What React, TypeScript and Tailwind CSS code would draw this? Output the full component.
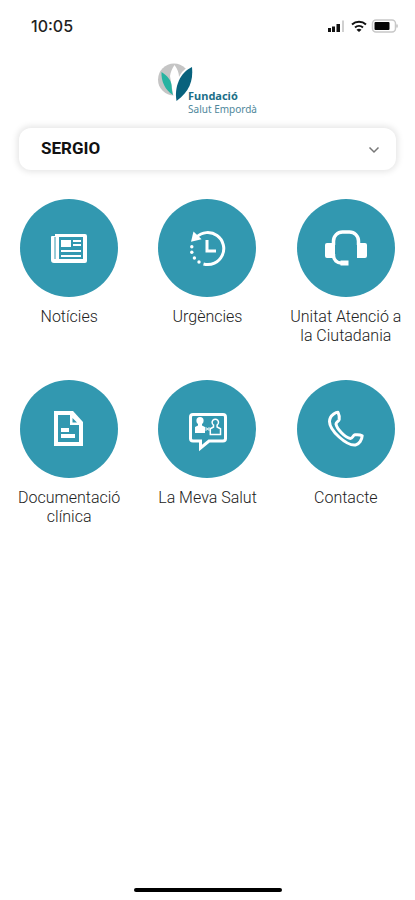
import type { ReactNode } from "react";

const TEAL = "#3298b0";

function NewsIcon() {
  return (
    <g>
      <path d="M12 10h28a2 2 0 0 1 2 2v25a2 2 0 0 1-2 2H9a3 3 0 0 1-3-3V13a1 1 0 0 1 1-1h3v-2z" fill="#fff" />
      <path d="M14 13h24v22H14z" fill={TEAL} />
      <path d="M10 13v22" stroke={TEAL} strokeWidth="1" />
      <path d="M16 16h10v7H16zM28 16h8v2h-8zM28 20h8v2h-8zM16 26h20v2H16zM16 31h20v2H16z" fill="#fff" />
    </g>
  );
}

function HistoryIcon() {
  return (
    <g fill="none" stroke="#fff" strokeWidth="3">
      <path d="M13.5 13.2A16 16 0 1 1 20.5 40" />
      <path d="M24 16v11h9" />
      <g fill="#fff" stroke="none">
        <path d="M10.5 7.5 8 17.8l10.6-2.5z" />
        <circle cx="8.8" cy="22.7" r="1.7" />
        <circle cx="8.8" cy="28.2" r="1.7" />
        <circle cx="11.4" cy="34" r="1.7" />
        <circle cx="16" cy="38" r="1.7" />
      </g>
    </g>
  );
}

function HeadsetIcon() {
  return (
    <g fill="none" stroke="#fff" strokeWidth="3.5">
      <path d="M11.5 21v-4a9 9 0 0 1 9-9h7a9 9 0 0 1 9 9v4M11.5 30v2a7.5 7.5 0 0 0 7.5 7h1" />
      <path
        d="M5 19h8v15H5a2 2 0 0 1-2-2V21a2 2 0 0 1 2-2zM35 19h8a2 2 0 0 1 2 2v11a2 2 0 0 1-2 2h-8zM18.5 36.5h8v5h-8z"
        fill="#fff"
        stroke="none"
      />
    </g>
  );
}

function DocumentIcon() {
  return (
    <g>
      <path d="M9 6h19l10 11v24H9z" fill="#fff" />
      <path d="M13 10h12v10h9v17H13z" fill={TEAL} />
      <path d="M27.5 13v4.5h4.5z" fill={TEAL} />
      <path d="M16 23h8v4h-8zM16 29h14v4H16z" fill="#fff" />
    </g>
  );
}

function ChatIcon() {
  return (
    <g fill="none" stroke="#fff" strokeWidth="3">
      <path d="M10 9.5h30a2.500 2.500 0 0 1 2.500 2.500v21.500a2.500 2.500 0 0 1-2.500 2.500H26l-8.500 7v-7H10a2.500 2.500 0 0 1-2.500-2.500V12A2.500 2.500 0 0 1 10 9.500z" />
      <g fill="#fff" stroke="none">
        <circle cx="17" cy="15.7" r="3.6" />
        <path d="M15 18h4v2.5l3 1.500v6H12v-6l3-1.500z" />
      </g>
      <path d="m22.5 22 4 4m0-4-4 4M22 24h6" strokeWidth="0.8" />
      <path d="M30.5 22v-2a3.200 3.200 0 1 1 3.600 0v2l3.400 1.800v5.700h-10.200v-5.700z" strokeWidth="1.5" />
    </g>
  );
}

function PhoneIcon() {
  return (
    <path
      d="M8.500 12.500c1-2.500 5-5.200 7.500-5.200 1 2 1.500 5.200 1.200 7.200-.4 2-3.200 2.500-3.200 4.500.8 4.800 9 13.800 14.500 14.500 2.200 0 2.300-3.300 4.500-3.700 2.500-.3 5.500 0 7.200 1-.2 4-3 8.400-6.700 9.200C24.500 41 7.500 25.500 7.500 16.500c0-1.500.4-2.800 1-4z"
      fill="none"
      stroke="#fff"
      strokeWidth="3"
      strokeLinejoin="round"
    />
  );
}

const sections: { label: string; icon: ReactNode }[] = [
  { label: "Notícies", icon: <NewsIcon /> },
  { label: "Urgències", icon: <HistoryIcon /> },
  { label: "Unitat Atenció a la Ciutadania", icon: <HeadsetIcon /> },
  { label: "Documentació clínica", icon: <DocumentIcon /> },
  { label: "La Meva Salut", icon: <ChatIcon /> },
  { label: "Contacte", icon: <PhoneIcon /> },
];

function StatusBar() {
  return (
    <div className="flex h-[52px] items-center justify-between pr-4 pl-[31px]">
      <span className="font-['Inter',sans-serif] text-base font-medium text-[#222]">10:05</span>
      <svg className="h-4 w-[72px]" viewBox="0 0 72 16" aria-hidden="true">
        <path d="M1 10h3v4H1zM5 8.500h3V14H5zM9.500 6h3.500v8H9.500z" fill="#111" />
        <path d="M15 2.500h2V14h-2z" fill="#d0d0d0" />
        <g fill="none" stroke="#111" strokeWidth="2">
          <path d="M25 6.500a10.500 10.500 0 0 1 14 0" />
          <path d="M28 9.500a6 6 0 0 1 8 0" />
        </g>
        <path d="m32 14-2.500-2.300a4 4 0 0 1 5 0z" fill="#111" />
        <rect x="45.5" y="2" width="23" height="12" rx="3.5" fill="#fff" stroke="#c8c8c8" strokeWidth="1.5" />
        <rect x="47.5" y="4" width="15" height="8" rx="1" fill="#050505" />
        <path d="M70 6.500v3" stroke="#c0c0c0" strokeWidth="1.5" />
      </svg>
    </div>
  );
}

function Logo() {
  return (
    <div className="flex justify-center">
      <svg className="h-10 w-[30px] overflow-visible" viewBox="0 0 30 40" aria-hidden="true">
        <circle cx="16" cy="16.5" r="16" fill="#c5c5c5" />
        <path
          d="M16.500 2C14 6 12.500 9 12 13l3 18 3 9 15-10V3C27 5 23.500 9 21 14c0-4-1.500-8-4.500-12z"
          fill="#fff"
        />
        <path d="M3.500 9c6 4 9.500 8 10 13 .3 4 .5 7 1.500 10C7 27 3 18 3.500 9z" fill="#27b3a1" />
        <path d="M34 4c1.500 14-3 25-15.500 34C16 24 22 9.500 34 4z" fill="#08627d" />
      </svg>
      <div className="flex flex-col pt-[26px] font-['Noto_Sans',sans-serif]">
        <span className="text-[11px] leading-[14px] font-bold text-[#1d6f89]">Fundació</span>
        <span className="text-[10px] leading-3 text-[#4e879b]">Salut Empordà</span>
      </div>
    </div>
  );
}

export default function App() {
  return (
    <div className="flex min-h-screen flex-col bg-white font-['Roboto',sans-serif]">
      <StatusBar />
      <header className="pt-[11px]">
        <Logo />
      </header>
      <div className="relative mx-[19px] mt-[13px]">
        <select
          aria-label="Usuari"
          className="h-[42px] w-full appearance-none rounded-xl bg-white px-[22px] text-[17px] font-bold text-[#111] shadow-[0_0_6px_2px_rgba(0,0,0,0.10)]"
        >
          <option>SERGIO</option>
        </select>
        <svg
          className="pointer-events-none absolute top-4 right-4 h-3 w-3"
          viewBox="0 0 12 12"
          fill="none"
          stroke="#777"
          strokeWidth="1.5"
          aria-hidden="true"
        >
          <path d="m1.5 3.500 4.500 4.500 4.500-4.500" />
        </svg>
      </div>
      <main className="mt-[29px] grid grid-cols-3 gap-y-[35px]">
        {sections.map(({ label, icon }) => (
          <button key={label} type="button" className="flex flex-col items-center gap-[10px]">
            <span className="flex size-[98px] items-center justify-center rounded-full bg-[#3298b0]">
              <svg className="size-12" viewBox="0 0 48 48" aria-hidden="true">
                {icon}
              </svg>
            </span>
            <span className="max-w-[120px] text-base leading-[19px] font-light text-[#222]">{label}</span>
          </button>
        ))}
      </main>
      <div className="mt-auto flex justify-center pb-2">
        <div className="h-1 w-[148px] rounded-full bg-black" />
      </div>
    </div>
  );
}
